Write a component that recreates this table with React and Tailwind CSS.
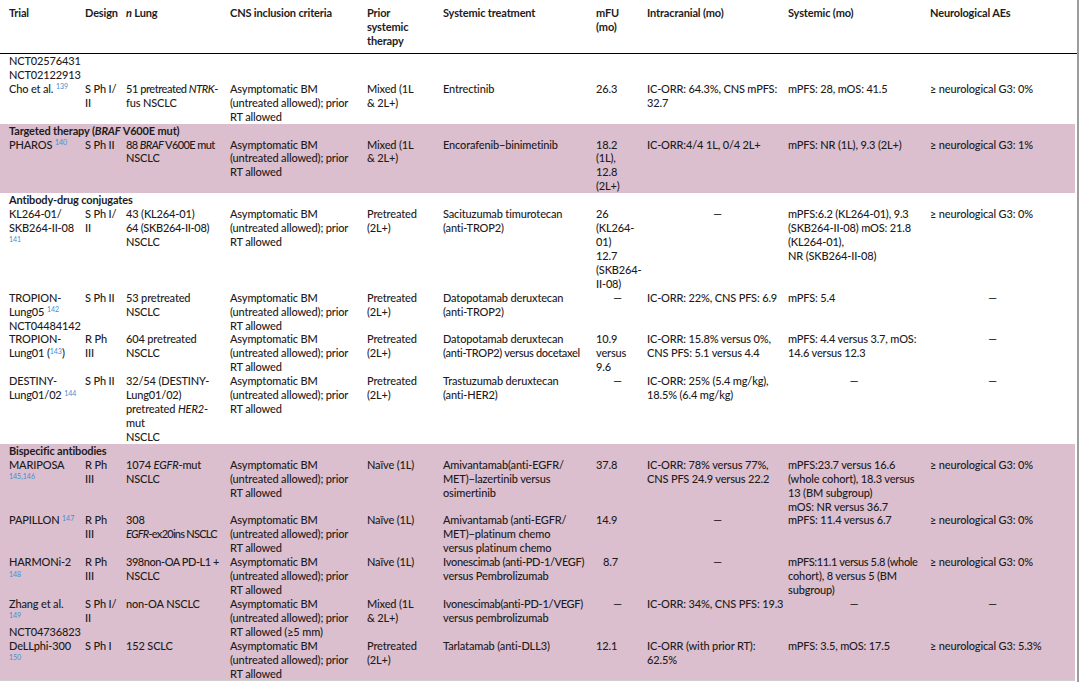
import React from "react";

const S = ({ children }) => (
  <sup className="text-[7px] text-[#3f8fd2] font-normal not-italic tracking-normal">{children}</sup>
);
const I = ({ children }) => <i>{children}</i>;
const T = ({ children, t = "tracking-[-0.45px]" }) => <span className={t}>{children}</span>;
const D = "—";

const GRID =
  "grid grid-cols-[76px_41px_104px_137px_76px_153px_51px_141px_142px_1fr] pl-[9px]";

function Cell({ lines = [], pad = 0, center = false, className = "" }) {
  const all = [...Array(pad).fill("\u00a0"), ...lines];
  return (
    <div className={`${center ? "text-center" : ""} ${className}`}>
      {all.map((l, i) => (
        <div key={i} className="whitespace-nowrap h-[13.93px]">
          {l}
        </div>
      ))}
    </div>
  );
}

const CNS = ["Asymptomatic BM", "(untreated allowed); prior", "RT allowed"];

function Row({ c, pad = 0 }) {
  return (
    <div className={GRID}>
      {c.map((cell, i) => {
        const o = Array.isArray(cell) ? { lines: cell } : cell;
        return (
          <Cell
            key={i}
            lines={o.lines}
            center={o.center}
            className={o.cls || ""}
            pad={i === 0 ? 0 : pad}
          />
        );
      })}
    </div>
  );
}

function SectionHead({ children }) {
  return (
    <div className="pl-[9px] h-[13.93px] font-bold whitespace-nowrap">{children}</div>
  );
}

const dash = (cls = "") => ({ lines: [D], center: true, cls });
const NEURO0 = ["\u2265 neurological G3: 0%"];

export default function App() {
  return (
    <div
      className="w-[1080px] h-[682px] bg-white overflow-hidden flex text-[#1e1b1c] text-[11px] leading-[13.93px] tracking-[-0.15px] font-medium"
      style={{ fontFamily: "Lato, 'Liberation Sans', sans-serif" }}
    >
      <div className="w-[1077px] flex flex-col">
        {/* Header */}
        <div className={`${GRID} pt-[6px] pb-[5px] border-b border-black font-bold leading-[14px]`}>
          <div>Trial</div>
          <div>Design</div>
          <div>
            <i>n</i> Lung
          </div>
          <div>CNS inclusion criteria</div>
          <div>
            <div>Prior</div>
            <div>systemic</div>
            <div>therapy</div>
          </div>
          <div>Systemic treatment</div>
          <div>
            <div>mFU</div>
            <div>(mo)</div>
          </div>
          <div>Intracranial (mo)</div>
          <div>Systemic (mo)</div>
          <div>Neurological AEs</div>
        </div>

        {/* Cho */}
        <div className="w-[1075px]">
          <Row
            pad={2}
            c={[
              ["NCT02576431", "NCT02122913", <>Cho et al. <S>139</S></>],
              ["S Ph I/", "II"],
              [<T>51 pretreated <I>NTRK</I>-</T>, "fus NSCLC"],
              CNS,
              ["Mixed (1L", "& 2L+)"],
              ["Entrectinib"],
              ["26.3"],
              ["IC-ORR: 64.3%, CNS mPFS:", "32.7"],
              ["mPFS: 28, mOS: 41.5"],
              NEURO0,
            ]}
          />
        </div>

        {/* Targeted */}
        <div className="w-[1075px] bg-[#dbbfce]">
          <SectionHead>
            Targeted therapy (<I>BRAF</I> V600E mut)
          </SectionHead>
          <Row
            c={[
              [<>PHAROS <S>140</S></>],
              ["S Ph II"],
              [<T t="tracking-[-0.6px]">88 <I>BRAF</I> V600E mut</T>, "NSCLC"],
              CNS,
              ["Mixed (1L", "& 2L+)"],
              ["Encorafenib\u2212binimetinib"],
              ["18.2", "(1L),", "12.8", "(2L+)"],
              ["IC-ORR:4/4 1L, 0/4 2L+"],
              ["mPFS: NR (1L), 9.3 (2L+)"],
              ["\u2265 neurological G3: 1%"],
            ]}
          />
        </div>

        {/* ADC */}
        <div className="w-[1075px]">
          <SectionHead>Antibody-drug conjugates</SectionHead>
          <Row
            c={[
              ["KL264-01/", "SKB264-II-08", <S>141</S>],
              ["S Ph I/", "II"],
              ["43 (KL264-01)", <T t="tracking-[-0.3px]">64 (SKB264-II-08)</T>, "NSCLC"],
              CNS,
              ["Pretreated", "(2L+)"],
              ["Sacituzumab timurotecan", "(anti-TROP2)"],
              ["26", "(KL264-", "01)", "12.7", "(SKB264-", "II-08)"],
              dash(),
              ["mPFS:6.2 (KL264-01), 9.3", "(SKB264-II-08) mOS: 21.8", "(KL264-01),", "NR (SKB264-II-08)"],
              NEURO0,
            ]}
          />
          <Row
            c={[
              ["TROPION-", <>Lung05 <S>142</S></>, "NCT04484142"],
              ["S Ph II"],
              ["53 pretreated", "NSCLC"],
              CNS,
              ["Pretreated", "(2L+)"],
              ["Datopotamab deruxtecan", "(anti-TROP2)"],
              dash("pr-[8px]"),
              ["IC-ORR: 22%, CNS PFS: 6.9"],
              ["mPFS: 5.4"],
              dash("pr-[20px]"),
            ]}
          />
          <Row
            c={[
              ["TROPION-", <>Lung01 (<S>143</S>)</>],
              ["R Ph", "III"],
              ["604 pretreated", "NSCLC"],
              CNS,
              ["Pretreated", "(2L+)"],
              ["Datopotamab deruxtecan", <T t="tracking-[-0.3px]">(anti-TROP2) versus docetaxel</T>],
              ["10.9", "versus", "9.6"],
              ["IC-ORR: 15.8% versus 0%,", "CNS PFS: 5.1 versus 4.4"],
              ["mPFS: 4.4 versus 3.7, mOS:", "14.6 versus 12.3"],
              dash("pr-[20px]"),
            ]}
          />
          <Row
            c={[
              ["DESTINY-", <>Lung01/02 <S>144</S></>],
              ["S Ph II"],
              ["32/54 (DESTINY-", "Lung01/02)", <>pretreated <I>HER2</I>-</>, "mut", "NSCLC"],
              CNS,
              ["Pretreated", "(2L+)"],
              ["Trastuzumab deruxtecan", "(anti-HER2)"],
              dash("pr-[8px]"),
              ["IC-ORR: 25% (5.4 mg/kg),", "18.5% (6.4 mg/kg)"],
              dash("pr-[10px]"),
              dash("pr-[20px]"),
            ]}
          />
        </div>

        {/* Bispecific */}
        <div className="w-[1075px] bg-[#dbbfce] border-b border-[#cfcfcf]">
          <SectionHead>Bispecific antibodies</SectionHead>
          <Row
            c={[
              ["MARIPOSA", <S>145,146</S>],
              ["R Ph", "III"],
              [<>1074 <I>EGFR</I>-mut</>, "NSCLC"],
              CNS,
              ["Na\u00efve (1L)"],
              ["Amivantamab(anti-EGFR/", "MET)\u2212lazertinib versus", "osimertinib"],
              ["37.8"],
              ["IC-ORR: 78% versus 77%,", "CNS PFS 24.9 versus 22.2"],
              ["mPFS:23.7 versus 16.6", "(whole cohort), 18.3 versus", "13 (BM subgroup)", "mOS: NR versus 36.7"],
              NEURO0,
            ]}
          />
          <Row
            c={[
              [<>PAPILLON <S>147</S></>],
              ["R Ph", "III"],
              ["308", <T t="tracking-[-0.75px]"><I>EGFR</I>-ex20ins NSCLC</T>],
              CNS,
              ["Na\u00efve (1L)"],
              ["Amivantamab (anti-EGFR/", "MET)\u2212platinum chemo", "versus platinum chemo"],
              ["14.9"],
              dash(),
              ["mPFS: 11.4 versus 6.7"],
              NEURO0,
            ]}
          />
          <Row
            c={[
              ["HARMONi-2", <S>148</S>],
              ["R Ph", "III"],
              [<T>398non-OA PD-L1 +</T>, "NSCLC"],
              CNS,
              ["Na\u00efve (1L)"],
              [<T t="tracking-[-0.3px]">Ivonescimab (anti-PD-1/VEGF)</T>, "versus Pembrolizumab"],
              { lines: ["8.7"], cls: "pl-[7px]" },
              dash(),
              [<T t="tracking-[-0.35px]">mPFS:11.1 versus 5.8 (whole</T>, "cohort), 8 versus 5 (BM", "subgroup)"],
              NEURO0,
            ]}
          />
          <Row
            c={[
              ["Zhang et al.", <S>149</S>, "NCT04736823"],
              ["S Ph I/", "II"],
              ["non-OA NSCLC"],
              ["Asymptomatic BM", "(untreated allowed); prior", "RT allowed (\u22655 mm)"],
              ["Mixed (1L", "& 2L+)"],
              [<T t="tracking-[-0.25px]">Ivonescimab(anti-PD-1/VEGF)</T>, "versus pembrolizumab"],
              dash("pr-[8px]"),
              ["IC-ORR: 34%, CNS PFS: 19.3"],
              dash("pr-[10px]"),
              dash("pr-[20px]"),
            ]}
          />
          <Row
            c={[
              ["DeLLphi-300", <S>150</S>],
              ["S Ph I"],
              ["152 SCLC"],
              CNS,
              ["Pretreated", "(2L+)"],
              ["Tarlatamab (anti-DLL3)"],
              ["12.1"],
              ["IC-ORR (with prior RT):", "62.5%"],
              ["mPFS: 3.5, mOS: 17.5"],
              ["\u2265 neurological G3: 5.3%"],
            ]}
          />
        </div>
      </div>
      <div className="w-[2px] h-full bg-[#9d9d9d]" />
    </div>
  );
}
